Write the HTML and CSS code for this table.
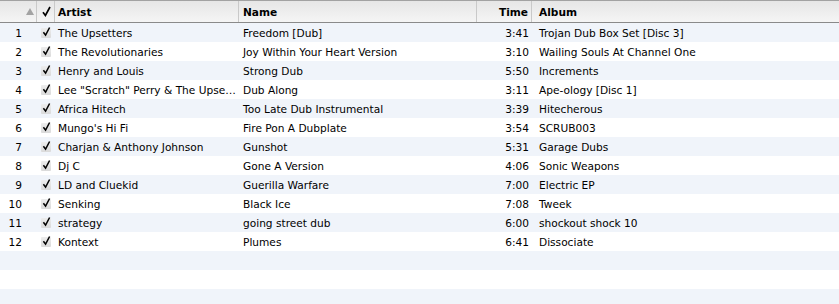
FILE: index.html
```html
<!DOCTYPE html>
<html>
<head>
<meta charset="utf-8">
<link rel="stylesheet" href="styles.css">
</head>
<body>
<div class="table">
  <div class="row head">
    <div class="c num"><span class="arrow"></span></div>
    <div class="c chk"><svg class="tick" width="9" height="11" viewBox="0 0 9 11"><path d="M1 6.2 L3.4 9.4 L8 1" fill="none" stroke="#000" stroke-width="1.7" stroke-linejoin="miter"/></svg></div>
    <div class="c artist">Artist</div>
    <div class="c name">Name</div>
    <div class="c time">Time</div>
    <div class="c album">Album</div>
  </div>
  <div class="row"><div class="c num">1</div><div class="c chk"><span class="box"><svg class="tick" width="9" height="11" viewBox="0 0 9 11"><path d="M1.4 6.2 L3.6 9.2 L7.6 1.5" fill="none" stroke="#000" stroke-width="1.5"/></svg></span></div><div class="c artist">The Upsetters</div><div class="c name">Freedom [Dub]</div><div class="c time">3:41</div><div class="c album">Trojan Dub Box Set [Disc 3]</div></div>
  <div class="row"><div class="c num">2</div><div class="c chk"><span class="box"><svg class="tick" width="9" height="11" viewBox="0 0 9 11"><path d="M1.4 6.2 L3.6 9.2 L7.6 1.5" fill="none" stroke="#000" stroke-width="1.5"/></svg></span></div><div class="c artist">The Revolutionaries</div><div class="c name">Joy Within Your Heart Version</div><div class="c time">3:10</div><div class="c album">Wailing Souls At Channel One</div></div>
  <div class="row"><div class="c num">3</div><div class="c chk"><span class="box"><svg class="tick" width="9" height="11" viewBox="0 0 9 11"><path d="M1.4 6.2 L3.6 9.2 L7.6 1.5" fill="none" stroke="#000" stroke-width="1.5"/></svg></span></div><div class="c artist">Henry and Louis</div><div class="c name">Strong Dub</div><div class="c time">5:50</div><div class="c album">Increments</div></div>
  <div class="row"><div class="c num">4</div><div class="c chk"><span class="box"><svg class="tick" width="9" height="11" viewBox="0 0 9 11"><path d="M1.4 6.2 L3.6 9.2 L7.6 1.5" fill="none" stroke="#000" stroke-width="1.5"/></svg></span></div><div class="c artist">Lee "Scratch" Perry &amp; The Upse…</div><div class="c name">Dub Along</div><div class="c time">3:11</div><div class="c album">Ape-ology [Disc 1]</div></div>
  <div class="row"><div class="c num">5</div><div class="c chk"><span class="box"><svg class="tick" width="9" height="11" viewBox="0 0 9 11"><path d="M1.4 6.2 L3.6 9.2 L7.6 1.5" fill="none" stroke="#000" stroke-width="1.5"/></svg></span></div><div class="c artist">Africa Hitech</div><div class="c name">Too Late Dub Instrumental</div><div class="c time">3:39</div><div class="c album">Hitecherous</div></div>
  <div class="row"><div class="c num">6</div><div class="c chk"><span class="box"><svg class="tick" width="9" height="11" viewBox="0 0 9 11"><path d="M1.4 6.2 L3.6 9.2 L7.6 1.5" fill="none" stroke="#000" stroke-width="1.5"/></svg></span></div><div class="c artist">Mungo's Hi Fi</div><div class="c name">Fire Pon A Dubplate</div><div class="c time">3:54</div><div class="c album">SCRUB003</div></div>
  <div class="row"><div class="c num">7</div><div class="c chk"><span class="box"><svg class="tick" width="9" height="11" viewBox="0 0 9 11"><path d="M1.4 6.2 L3.6 9.2 L7.6 1.5" fill="none" stroke="#000" stroke-width="1.5"/></svg></span></div><div class="c artist">Charjan &amp; Anthony Johnson</div><div class="c name">Gunshot</div><div class="c time">5:31</div><div class="c album">Garage Dubs</div></div>
  <div class="row"><div class="c num">8</div><div class="c chk"><span class="box"><svg class="tick" width="9" height="11" viewBox="0 0 9 11"><path d="M1.4 6.2 L3.6 9.2 L7.6 1.5" fill="none" stroke="#000" stroke-width="1.5"/></svg></span></div><div class="c artist">Dj C</div><div class="c name">Gone A Version</div><div class="c time">4:06</div><div class="c album">Sonic Weapons</div></div>
  <div class="row"><div class="c num">9</div><div class="c chk"><span class="box"><svg class="tick" width="9" height="11" viewBox="0 0 9 11"><path d="M1.4 6.2 L3.6 9.2 L7.6 1.5" fill="none" stroke="#000" stroke-width="1.5"/></svg></span></div><div class="c artist">LD and Cluekid</div><div class="c name">Guerilla Warfare</div><div class="c time">7:00</div><div class="c album">Electric EP</div></div>
  <div class="row"><div class="c num">10</div><div class="c chk"><span class="box"><svg class="tick" width="9" height="11" viewBox="0 0 9 11"><path d="M1.4 6.2 L3.6 9.2 L7.6 1.5" fill="none" stroke="#000" stroke-width="1.5"/></svg></span></div><div class="c artist">Senking</div><div class="c name">Black Ice</div><div class="c time">7:08</div><div class="c album">Tweek</div></div>
  <div class="row"><div class="c num">11</div><div class="c chk"><span class="box"><svg class="tick" width="9" height="11" viewBox="0 0 9 11"><path d="M1.4 6.2 L3.6 9.2 L7.6 1.5" fill="none" stroke="#000" stroke-width="1.5"/></svg></span></div><div class="c artist">strategy</div><div class="c name">going street dub</div><div class="c time">6:00</div><div class="c album">shockout shock 10</div></div>
  <div class="row"><div class="c num">12</div><div class="c chk"><span class="box"><svg class="tick" width="9" height="11" viewBox="0 0 9 11"><path d="M1.4 6.2 L3.6 9.2 L7.6 1.5" fill="none" stroke="#000" stroke-width="1.5"/></svg></span></div><div class="c artist">Kontext</div><div class="c name">Plumes</div><div class="c time">6:41</div><div class="c album">Dissociate</div></div>
  <div class="row"></div>
  <div class="row"></div>
  <div class="row"></div>
</div>
</body>
</html>
```

FILE: styles.css
```css
html, body {
  margin: 0;
  padding: 0;
  background: #fff;
}
body {
  width: 839px;
  height: 304px;
  overflow: hidden;
  font-family: "DejaVu Sans", "Liberation Sans", sans-serif;
  font-size: 10.6px;
  color: #000;
}
.table {
  display: flex;
  flex-direction: column;
}
.row {
  display: grid;
  grid-template-columns: 37px 18px 184px 238px 55px 1fr;
  height: 19px;
  align-items: center;
  flex: none;
}
.row:nth-child(even) {
  background: #f0f4fa;
}
.row.head {
  height: 21px;
  border-top: 1px solid #a2a2a2;
  border-bottom: 1px solid #8a8a8a;
  background: linear-gradient(#e6e6e6, #f5f5f5);
  font-weight: bold;
  font-size: 10.6px;
}
.head .c {
  height: 100%;
  display: flex;
  align-items: center;
  border-right: 1px solid #c9c9c9;
  box-sizing: border-box;
}
.head .c.album { border-right: none; }
.c {
  white-space: nowrap;
  overflow: hidden;
}
.num {
  text-align: right;
  padding-right: 15px;
}
.head .num {
  justify-content: flex-start;
  padding-left: 26px;
  padding-right: 0;
}
.arrow {
  width: 0;
  height: 0;
  border-left: 4px solid transparent;
  border-right: 4px solid transparent;
  border-bottom: 7px solid #a3a3a3;
}
.chk {
  padding-left: 4px;
  display: flex;
  align-items: center;
  height: 100%;
}
.head .chk {
  padding-left: 5px;
}
.tick { display: block; }
.box {
  position: relative;
  display: block;
  width: 10px;
  height: 10px;
  margin-top: 1px;
  background: linear-gradient(#ededed, #dadada);
  border-radius: 1px;
}
.box .tick {
  position: absolute;
  left: 1px;
  top: -2px;
}
.artist { padding-left: 3px; }
.name { padding-left: 4px; }
.time {
  text-align: right;
  padding-right: 3px;
}
.head .time { justify-content: flex-end; }
.album { padding-left: 7px; }
```
